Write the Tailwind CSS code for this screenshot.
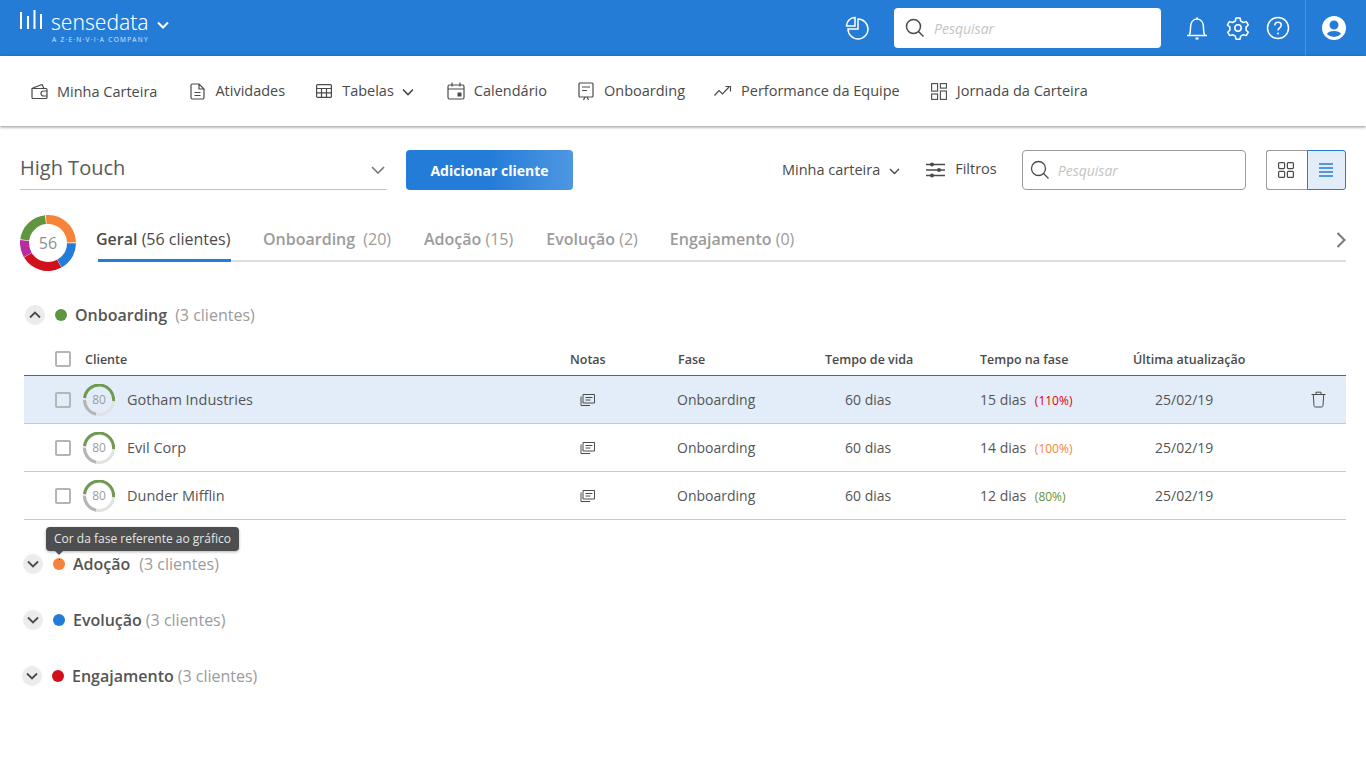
<!DOCTYPE html>
<html lang="pt-BR">
<head>
<meta charset="utf-8">
<script src="https://cdn.jsdelivr.net/npm/@tailwindcss/browser@4"></script>
</head>
<body class="bg-white font-['Open_Sans',sans-serif] text-[#4a4a4a] overflow-hidden">
<div class="relative w-[1366px] h-[768px] overflow-hidden">

<!-- top bar -->
<header class="h-14 bg-[#247cd7] flex items-center text-white">
  <div class="w-[20px]"></div>
  <svg width="24" height="20" viewBox="0 0 24 20" class="mb-[17px]" fill="none" stroke="#fff" stroke-width="2"><path d="M1 2v17M8 6v13M14.500 0v19M21 4v15"/></svg>
  <div class="ml-[7px] w-[100px] h-[44px] flex flex-col">
    <span class="text-[21px] leading-[24px] mt-[4px] font-['Noto_Sans',sans-serif] font-light">sensedata</span>
    <span class="text-[6.500px] leading-[8px] mt-[2px] ml-[1px] tracking-[1.300px] text-white/80 whitespace-nowrap">A Z·E·N·V·I·A COMPANY</span>
  </div>
  <svg width="14" height="14" viewBox="0 0 14 14" class="ml-[5px] mb-[6px]" fill="none" stroke="#fff" stroke-width="2"><path d="M2 4.500l5 5 5-5"/></svg>
  <svg width="24" height="24" viewBox="0 0 24 24" class="ml-[675px]" fill="none" stroke="#fff" stroke-width="1.500"><path d="M10 1.500A8.500 8.500 0 0 0 1.500 10H10z"/><path d="M13 3a10 10 0 1 1-10 10h10z"/></svg>
  <div class="ml-[25px] w-[267px] h-10 bg-white rounded-[4px] flex items-center pl-[11px]">
    <svg width="20" height="20" viewBox="0 0 20 20" fill="none" stroke="#4a4a4a" stroke-width="1.500"><circle cx="8.500" cy="8.500" r="7"/><path d="M13.500 13.500l5 5"/></svg>
    <span class="ml-[9px] text-[14px] italic text-[#c4c4c4]">Pesquisar</span>
  </div>
  <svg width="24" height="26" viewBox="0 0 24 26" class="ml-[24px]" fill="none" stroke="#fff" stroke-width="1.500"><path d="M2 20.500h20M4 20.500c1.500-2 1.500-4 1.500-8C5.500 7.500 8 4 12 4s6.500 3.500 6.500 8.500c0 4 0 6 1.500 8"/><path d="M11 3.500h2M10.500 23.500h3" stroke-width="2"/></svg>
  <svg width="24" height="24" viewBox="0 0 24 24" class="ml-[17px]" fill="none" stroke="#fff" stroke-width="1.500"><circle cx="12" cy="12" r="3.200"/><path d="M10 2h4l.7 3 2.600 1.500 3-.9 2 3.400-2.200 2.100v3l2.200 2.100-2 3.400-3-.9-2.600 1.500-.7 3h-4l-.7-3-2.600-1.500-3 .9-2-3.400 2.200-2.100v-3L1.400 9l2-3.400 3 .9L9.300 5z" stroke-linejoin="round"/></svg>
  <svg width="24" height="24" viewBox="0 0 24 24" class="ml-[16px]" fill="none" stroke="#fff" stroke-width="1.500"><circle cx="12" cy="12" r="10.500"/><path d="M8.800 9.500c0-2 1.500-3.200 3.300-3.200s3.200 1.200 3.200 2.900c0 2.600-3.300 2.600-3.300 5.300"/><circle cx="12" cy="17.500" r="1" fill="#fff" stroke="none"/></svg>
  <div class="ml-[15px] w-px h-14 bg-[#4a93de]"></div>
  <svg width="26" height="26" viewBox="0 0 26 26" class="ml-[15px]" fill="#fff"><path fill-rule="evenodd" d="M13 1a12 12 0 1 1 0 24 12 12 0 0 1 0-24zm0 4.500a4.500 4.500 0 1 0 0 9 4.500 4.500 0 0 0 0-9zM13 16c-3.500 0-6.300 1.200-7 3a9.500 9.500 0 0 0 14 0c-.7-1.800-3.500-3-7-3z"/></svg>
</header>

<!-- nav -->
<nav class="h-[70px] bg-white shadow-[0_1px_3px_rgba(0,0,0,0.45)] relative flex items-center pl-[31px] text-[14.500px] font-medium whitespace-nowrap">
  <svg width="17" height="17" viewBox="0 0 17 17" class="mt-[1px]" fill="none" stroke="#4a4a4a" stroke-width="1.200"><path d="M1 5.500h14a1 1 0 0 1 1 1v8a1 1 0 0 1-1 1H2a1 1 0 0 1-1-1zM1 5.500l1-.500 9-3.500 2 4"/><path d="M16 8h-3.500a2.500 2.500 0 0 0 0 5H16"/></svg>
  <span class="ml-[9px] mt-[1px]">Minha Carteira</span>
  <svg width="15" height="17" viewBox="0 0 15 17" class="ml-[33px]" fill="none" stroke="#4a4a4a" stroke-width="1.200"><path d="M2.500 1H9l5 5v8.500a1.500 1.500 0 0 1-1.500 1.500h-10A1.500 1.500 0 0 1 1 14.500v-12A1.500 1.500 0 0 1 2.500 1zM9 1v5h5M4.500 9.500h6M4.500 12.500h6"/></svg>
  <span class="ml-[10px] -mt-[1px]">Atividades</span>
  <svg width="16" height="14" viewBox="0 0 16 14" class="ml-[31px]" fill="none" stroke="#4a4a4a" stroke-width="1.200"><rect x=".6" y=".6" width="14.800" height="12.800" rx="1"/><path d="M.6 4.500h14.800M.6 8.800h14.800M5.500 4.500v8.900M10.500 4.500v8.900"/></svg>
  <span class="ml-[10px]">Tabelas</span>
  <svg width="12" height="8" viewBox="0 0 12 8" class="ml-[8px] mt-[2px]" fill="none" stroke="#4a4a4a" stroke-width="1.700"><path d="M1 1.500l5 5 5-5"/></svg>
  <svg width="18" height="18" viewBox="0 0 18 18" class="ml-[33px]" fill="none" stroke="#4a4a4a" stroke-width="1.200"><rect x="1" y="3" width="16" height="14" rx="1.500"/><path d="M1 7h16M5 .5v4M13 .5v4"/><rect x="10.500" y="10.500" width="4" height="4" fill="#4a4a4a" stroke="none"/></svg>
  <span class="ml-[9px]">Calendário</span>
  <svg width="16" height="19" viewBox="0 0 16 19" class="ml-[31px]" fill="none" stroke="#4a4a4a" stroke-width="1.200"><rect x="1" y="1" width="14" height="14" rx="1"/><path d="M4 5h8M4 8.500h5M5.500 18l1.500-3M10.500 18L9 15"/></svg>
  <span class="ml-[10px]">Onboarding</span>
  <svg width="18" height="12" viewBox="0 0 18 12" class="ml-[29px]" fill="none" stroke="#4a4a4a" stroke-width="1.200"><path d="M.5 10.500L5 5.500l3.500 3.500 6.500-7M11.500 1.500h5v5"/></svg>
  <span class="ml-[9px]">Performance da Equipe</span>
  <svg width="16" height="17" viewBox="0 0 16 17" class="ml-[31px]" fill="none" stroke="#4a4a4a" stroke-width="1.100"><rect x=".6" y=".6" width="6" height="7.500"/><rect x="9.400" y=".6" width="6" height="4.500"/><rect x=".6" y="11" width="6" height="5.400"/><rect x="9.400" y="8" width="6" height="8.400"/></svg>
  <span class="ml-[10px]">Jornada da Carteira</span>
</nav>

<!-- toolbar -->
<section class="h-10 mt-6 flex items-center whitespace-nowrap">
  <div class="ml-5 w-[367px] h-10 border-b border-[#c4c4c4] flex items-center justify-between pr-[2px]">
    <span class="text-[20px] text-[#5a5a5a] -mt-[3px]">High Touch</span>
    <svg width="14" height="8" viewBox="0 0 14 8" fill="none" stroke="#777" stroke-width="1.600"><path d="M1 1l6 6 6-6"/></svg>
  </div>
  <button class="ml-[19px] w-[167px] h-10 rounded-[4px] bg-gradient-to-r from-[#237cd8] via-[#237cd8] to-[#4d97e2] text-white text-[14px] font-bold">Adicionar cliente</button>
  <span class="ml-[209px] text-[14.500px] font-medium">Minha carteira</span>
  <svg width="11" height="7" viewBox="0 0 11 7" class="ml-[9px] mt-[2px]" fill="none" stroke="#4a4a4a" stroke-width="1.400"><path d="M1 1l4.500 4.500L10 1"/></svg>
  <svg width="19" height="18" viewBox="0 0 19 18" class="ml-[26px]" fill="none" stroke="#4a4a4a" stroke-width="1.500"><path d="M0 3.500h19M0 9h19M0 14.500h19"/><circle cx="6" cy="3.500" r="2" fill="#4a4a4a" stroke="none"/><circle cx="13" cy="9" r="2" fill="#4a4a4a" stroke="none"/><circle cx="6" cy="14.500" r="2" fill="#4a4a4a" stroke="none"/></svg>
  <span class="ml-[10px] text-[14.500px] font-medium -mt-[2px]">Filtros</span>
  <div class="ml-[25px] w-[224px] h-10 border border-[#9b9b9b] rounded-[4px] flex items-center pl-[7px]">
    <svg width="20" height="20" viewBox="0 0 20 20" fill="none" stroke="#4a4a4a" stroke-width="1.300"><circle cx="8.500" cy="8.500" r="7"/><path d="M13.500 13.500l5 5"/></svg>
    <span class="ml-[8px] text-[14px] italic text-[#c4c4c4]">Pesquisar</span>
  </div>
  <div class="ml-5 h-10 flex">
    <div class="w-[41px] border border-r-0 border-[#9b9b9b] rounded-l-[3px] flex items-center justify-center pr-[1px]">
      <svg width="16" height="16" viewBox="0 0 16 16" fill="none" stroke="#4a4a4a" stroke-width="1.200"><rect x=".6" y=".6" width="6" height="6" rx="1"/><rect x="9.400" y=".6" width="6" height="6" rx="1"/><rect x=".6" y="9.400" width="6" height="6" rx="1"/><rect x="9.400" y="9.400" width="6" height="6" rx="1"/></svg>
    </div>
    <div class="w-[39px] border border-[#237cd8] bg-[#e3edf9] rounded-r-[3px] flex items-center justify-center">
      <svg width="16" height="14" viewBox="0 0 16 14" fill="none" stroke="#237cd8" stroke-width="1.400"><path d="M1 1h14M1 5h14M1 9h14M1 13h14"/></svg>
    </div>
  </div>
</section>

<!-- tabs -->
<section class="h-14 mt-[25px] ml-5 flex whitespace-nowrap">
  <div class="relative w-14 h-14 shrink-0">
    <svg width="56" height="56" viewBox="0 0 56 56" fill="none" stroke-width="9" class="absolute inset-0">
      <circle cx="28" cy="28" r="23.500" pathLength="360" stroke="#f68338" stroke-dasharray="93 267" transform="rotate(-94.500 28 28)"/>
      <circle cx="28" cy="28" r="23.500" pathLength="360" stroke="#237cd8" stroke-dasharray="60 300" transform="rotate(0.500 28 28)"/>
      <circle cx="28" cy="28" r="23.500" pathLength="360" stroke="#d0101b" stroke-dasharray="87 273" transform="rotate(61.500 28 28)"/>
      <circle cx="28" cy="28" r="23.500" pathLength="360" stroke="#b92c9f" stroke-dasharray="37 323" transform="rotate(149.500 28 28)"/>
      <circle cx="28" cy="28" r="23.500" pathLength="360" stroke="#5f9440" stroke-dasharray="76 284" transform="rotate(187.500 28 28)"/>
    </svg>
    <span class="absolute inset-0 flex items-center justify-center text-[16px] text-[#8f8f8f]">56</span>
  </div>
  <div class="ml-[20px] w-[1250px] h-[47px] flex text-[16px] text-[#9b9b9b] relative">
    <span class="absolute left-[2px] right-0 bottom-0 h-[2px] bg-[#dcdce2]"></span>
    <span class="absolute left-[2px] w-[133px] bottom-0 h-[3px] bg-[#237cd8]"></span>
    <div class="w-[135px] text-[#4a4a4a] pt-[12px] shrink-0"><span class="font-semibold">Geral</span> (56 clientes)</div>
    <div class="ml-[32px] pt-[12px]"><span class="font-semibold">Onboarding</span> <span class="ml-[4px]">(20)</span></div>
    <div class="ml-[33px] pt-[12px]"><span class="font-semibold">Adoção</span> (15)</div>
    <div class="ml-[33px] pt-[12px]"><span class="font-semibold">Evolução</span> (2)</div>
    <div class="ml-[32px] pt-[12px]"><span class="font-semibold">Engajamento</span> (0)</div>
    <svg width="10" height="16" viewBox="0 0 10 16" class="absolute right-0 top-[17px]" fill="none" stroke="#777" stroke-width="2"><path d="M1.500 1l7 7-7 7"/></svg>
  </div>
</section>

<!-- onboarding group -->
<section class="mt-[34px]">
  <div class="h-5 ml-[25px] flex items-center whitespace-nowrap">
    <span class="w-5 h-5 rounded-full bg-[#ececec] flex items-center justify-center">
      <svg width="12" height="8" viewBox="0 0 12 8" fill="none" stroke="#4a4a4a" stroke-width="1.800"><path d="M1 6.500l5-5 5 5"/></svg>
    </span>
    <span class="ml-[10px] w-3 h-3 rounded-full bg-[#5f9440]"></span>
    <span class="ml-2 text-[16px] font-semibold text-[#555]">Onboarding</span>
    <span class="ml-[8px] text-[16px] text-[#9b9b9b]">(3 clientes)</span>
  </div>

  <div class="mt-[26px] ml-6 w-[1322px]">
    <div class="h-[25px] border-b border-[#5f6368] grid grid-cols-[61px_485px_108px_147px_155px_153px_213px] text-[12.500px] font-semibold whitespace-nowrap leading-[16px]">
      <div class="pl-[31px]"><span class="block w-4 h-4 border-2 border-[#b5b5b5] rounded-[2px] bg-white"></span></div>
      <div class="pt-[1px]">Cliente</div><div class="pt-[1px]">Notas</div><div class="pt-[1px]">Fase</div><div class="pt-[1px]">Tempo de vida</div><div class="pt-[1px]">Tempo na fase</div><div class="pt-[1px]">Última atualização</div>
    </div>

    <div class="h-12 bg-[#e3edf9] border-b border-[#c9c9c9] grid grid-cols-[59px_487px_108px_147px_155px_153px_213px] items-center text-[14px] text-[#555] whitespace-nowrap">
      <div class="pl-[31px]"><span class="block w-4 h-4 border-2 border-[#b5b5b5] rounded-[2px]"></span></div>
      <div class="flex items-center">
        <div class="relative w-8 h-8"><svg width="32" height="32" viewBox="0 0 32 32" fill="none" stroke-width="3" class="absolute inset-0"><circle cx="16" cy="16" r="14.500" stroke="#e2e2e2"/><path d="M1.600 14A14.500 14.500 0 0 1 30.500 17" stroke="#6f9b50"/><path d="M1.500 16A14.500 14.500 0 0 0 13 30.200" stroke="#b5b5b5"/></svg><span class="absolute inset-0 flex items-center justify-center text-[12px] text-[#9b9b9b]">80</span></div>
        <span class="ml-3 text-[14.500px] font-medium">Gotham Industries</span>
      </div>
      <div class="pl-[10px]"><svg width="15" height="12" viewBox="0 0 15 12" fill="none" stroke="#4a4a4a" stroke-width="1"><path d="M3 .5h11.500v8.500H3zM1 2.500v9h9"/><path d="M5.500 3.500h7M5.500 6h5"/></svg></div>
      <div class="-ml-px">Onboarding</div>
      <div class="pl-5">60 dias</div>
      <div>15 dias <span class="ml-[5px] text-[12px] text-[#e00000]">(110%)</span></div>
      <div class="pl-[22px] flex items-center justify-between pr-[20px]"><span>25/02/19</span><svg width="15" height="17" viewBox="0 0 15 17" fill="none" stroke="#4a4a4a" stroke-width="1"><path d="M.5 3.500h14M5 3V1.200h5V3M2.300 4l.7 10.500a1.500 1.500 0 0 0 1.500 1.500h6a1.500 1.500 0 0 0 1.500-1.500l.7-10.500"/></svg></div>
    </div>

    <div class="h-12 border-b border-[#c9c9c9] grid grid-cols-[59px_487px_108px_147px_155px_153px_213px] items-center text-[14px] text-[#555] whitespace-nowrap">
      <div class="pl-[31px]"><span class="block w-4 h-4 border-2 border-[#b5b5b5] rounded-[2px]"></span></div>
      <div class="flex items-center">
        <div class="relative w-8 h-8"><svg width="32" height="32" viewBox="0 0 32 32" fill="none" stroke-width="3" class="absolute inset-0"><circle cx="16" cy="16" r="14.500" stroke="#e2e2e2"/><path d="M1.600 14A14.500 14.500 0 0 1 30.500 17" stroke="#6f9b50"/><path d="M1.500 16A14.500 14.500 0 0 0 13 30.200" stroke="#b5b5b5"/></svg><span class="absolute inset-0 flex items-center justify-center text-[12px] text-[#9b9b9b]">80</span></div>
        <span class="ml-3 text-[14.500px] font-medium">Evil Corp</span>
      </div>
      <div class="pl-[10px]"><svg width="15" height="12" viewBox="0 0 15 12" fill="none" stroke="#4a4a4a" stroke-width="1"><path d="M3 .5h11.500v8.500H3zM1 2.500v9h9"/><path d="M5.500 3.500h7M5.500 6h5"/></svg></div>
      <div class="-ml-px">Onboarding</div>
      <div class="pl-5">60 dias</div>
      <div>14 dias <span class="ml-[5px] text-[12px] text-[#f68338]">(100%)</span></div>
      <div class="pl-[22px]">25/02/19</div>
    </div>

    <div class="h-12 border-b border-[#c9c9c9] grid grid-cols-[59px_487px_108px_147px_155px_153px_213px] items-center text-[14px] text-[#555] whitespace-nowrap">
      <div class="pl-[31px]"><span class="block w-4 h-4 border-2 border-[#b5b5b5] rounded-[2px]"></span></div>
      <div class="flex items-center">
        <div class="relative w-8 h-8"><svg width="32" height="32" viewBox="0 0 32 32" fill="none" stroke-width="3" class="absolute inset-0"><circle cx="16" cy="16" r="14.500" stroke="#e2e2e2"/><path d="M1.600 14A14.500 14.500 0 0 1 30.500 17" stroke="#6f9b50"/><path d="M1.500 16A14.500 14.500 0 0 0 13 30.200" stroke="#b5b5b5"/></svg><span class="absolute inset-0 flex items-center justify-center text-[12px] text-[#9b9b9b]">80</span></div>
        <span class="ml-3 text-[14.500px] font-medium">Dunder Mifflin</span>
      </div>
      <div class="pl-[10px]"><svg width="15" height="12" viewBox="0 0 15 12" fill="none" stroke="#4a4a4a" stroke-width="1"><path d="M3 .5h11.500v8.500H3zM1 2.500v9h9"/><path d="M5.500 3.500h7M5.500 6h5"/></svg></div>
      <div class="-ml-px">Onboarding</div>
      <div class="pl-5">60 dias</div>
      <div>12 dias <span class="ml-[5px] text-[12px] text-[#5f9440]">(80%)</span></div>
      <div class="pl-[22px]">25/02/19</div>
    </div>
  </div>
</section>

<!-- collapsed groups -->
<section class="whitespace-nowrap">
  <div class="h-5 mt-[34px] ml-[23px] flex items-center">
    <span class="w-5 h-5 rounded-full bg-[#ececec] flex items-center justify-center"><svg width="12" height="8" viewBox="0 0 12 8" fill="none" stroke="#4a4a4a" stroke-width="1.800"><path d="M1 1.500l5 5 5-5"/></svg></span>
    <span class="ml-[10px] w-3 h-3 rounded-full bg-[#f68338]"></span>
    <span class="ml-2 text-[16px] font-semibold text-[#555]">Adoção</span>
    <span class="ml-[9px] text-[16px] text-[#9b9b9b]">(3 clientes)</span>
  </div>
  <div class="h-5 mt-[36px] ml-[23px] flex items-center">
    <span class="w-5 h-5 rounded-full bg-[#ececec] flex items-center justify-center"><svg width="12" height="8" viewBox="0 0 12 8" fill="none" stroke="#4a4a4a" stroke-width="1.800"><path d="M1 1.500l5 5 5-5"/></svg></span>
    <span class="ml-[10px] w-3 h-3 rounded-full bg-[#237cd8]"></span>
    <span class="ml-2 text-[16px] font-semibold text-[#555]">Evolução</span>
    <span class="ml-[4px] text-[16px] text-[#9b9b9b]">(3 clientes)</span>
  </div>
  <div class="h-5 mt-[36px] ml-[22px] flex items-center">
    <span class="w-5 h-5 rounded-full bg-[#ececec] flex items-center justify-center"><svg width="12" height="8" viewBox="0 0 12 8" fill="none" stroke="#4a4a4a" stroke-width="1.800"><path d="M1 1.500l5 5 5-5"/></svg></span>
    <span class="ml-[10px] w-3 h-3 rounded-full bg-[#d0101b]"></span>
    <span class="ml-2 text-[16px] font-semibold text-[#555]">Engajamento</span>
    <span class="ml-[4px] text-[16px] text-[#9b9b9b]">(3 clientes)</span>
  </div>
</section>

<!-- tooltip -->
<div class="absolute left-[46px] top-[527px] w-[193px] h-[24px] rounded-[4px] bg-[#4d4e50] shadow-[0_1px_3px_rgba(0,0,0,0.3)] text-[#e6e6e6] text-[12px] leading-[24px] text-center whitespace-nowrap">
  Cor da fase referente ao gráfico
  <span class="absolute left-[8px] top-[23px] w-0 h-0 border-x-[5px] border-x-transparent border-t-[5px] border-t-[#4d4e50]"></span>
  <span class="absolute left-[13px] top-[32px] w-px h-px bg-[#4d4e50]"></span>
</div>

</div>
</body>
</html>
